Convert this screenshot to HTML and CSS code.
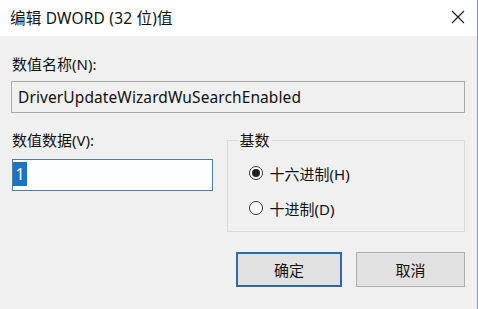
FILE: index.html
```html
<!DOCTYPE html>
<html lang="zh-CN">
<head>
<meta charset="utf-8">
<title>编辑 DWORD (32 位)值</title>
<link rel="stylesheet" href="styles.css">
</head>
<body>
<div class="dialog">
  <div class="titlebar">
    <span class="title">编辑 DWORD (32 位)值</span>
    <svg class="close" width="14" height="14" viewBox="0 0 14 14"><path d="M1 1 L13 13 M13 1 L1 13" stroke="#222" stroke-width="1.2" fill="none"/></svg>
  </div>
  <div class="content">
    <div class="label">数值名称(N):</div>
    <div class="namebox">DriverUpdateWizardWuSearchEnabled</div>
    <div class="row">
      <div class="leftcol">
        <div class="label">数值数据(V):</div>
        <div class="valuebox"><span class="sel">1</span></div>
      </div>
      <fieldset class="group">
        <legend>基数</legend>
        <div class="radio first"><span class="dot checked"></span><span>十六进制(H)</span></div>
        <div class="radio"><span class="dot"></span><span>十进制(D)</span></div>
      </fieldset>
    </div>
    <div class="buttons">
      <div class="btn ok">确定</div>
      <div class="btn cancel">取消</div>
    </div>
  </div>
</div>
</body>
</html>
```

FILE: styles.css
```css
html, body {
  margin: 0;
  padding: 0;
  background: #f0f0f0;
}
.dialog {
  width: 478px;
  height: 309px;
  box-sizing: border-box;
  border-right: 1px solid #7c9cbc;
  font-family: "Noto Sans", "Noto Sans CJK SC", sans-serif;
  color: #111;
  background: #f0f0f0;
  display: flex;
  flex-direction: column;
}
.titlebar {
  height: 36px;
  background: #fff;
  display: flex;
  align-items: center;
  justify-content: space-between;
  padding: 0 12px 0 10px;
  flex: none;
}
.title {
  font-size: 15.5px;
  line-height: 20px;
  letter-spacing: 0.2px;
}
.close {
  display: block;
  margin-top: -2px;
}
.content {
  padding: 18px 12px 0 11px;
  display: flex;
  flex-direction: column;
}
.label {
  font-size: 15px;
  line-height: 20px;
  padding-left: 1px;
}
.namebox {
  margin-top: 7px;
  height: 32px;
  box-sizing: border-box;
  border: 1px solid #a9a9a9;
  background: #f0f0f0;
  font-size: 15.5px;
  letter-spacing: 0.1px;
  line-height: 30px;
  padding-left: 6px;
}
.row {
  display: flex;
  margin-top: 17px;
}
.leftcol {
  width: 201px;
  margin-left: 1px;
  display: flex;
  flex-direction: column;
}
.leftcol .label {
  padding-left: 0;
}
.valuebox {
  margin-top: 9px;
  height: 32px;
  box-sizing: border-box;
  border: 1px solid #4a7fa8;
  background: #fdfeff;
  padding: 2px 0 0 0;
}
.sel {
  display: inline-block;
  width: 14px;
  height: 24px;
  background: #1f73c0;
  color: #fff;
  font-size: 16px;
  line-height: 24px;
  text-align: center;
  vertical-align: top;
}
.group {
  margin: 0 0 0 14px;
  padding: 0;
  width: 239px;
  height: 102px;
  box-sizing: border-box;
  border: 1px solid #dcdcdc;
}
.group legend {
  font-size: 15px;
  line-height: 20px;
  padding: 0 2px;
  margin-left: 10px;
}
.radio {
  display: flex;
  align-items: center;
  height: 20px;
  margin: 15px 0 0 21px;
  font-size: 15px;
}
.radio.first {
  margin-top: 13px;
}
.dot {
  width: 14px;
  height: 14px;
  box-sizing: border-box;
  border: 1px solid #333;
  border-radius: 50%;
  background: #fff;
  margin-right: 7px;
  display: flex;
  align-items: center;
  justify-content: center;
}
.dot.checked::after {
  content: "";
  width: 8px;
  height: 8px;
  border-radius: 50%;
  background: #222;
}
.buttons {
  display: flex;
  justify-content: flex-end;
  gap: 14px;
  margin-top: 20px;
}
.btn {
  height: 35px;
  box-sizing: border-box;
  background: #e1e1e1;
  font-size: 15px;
  display: flex;
  align-items: center;
  justify-content: center;
}
.ok {
  width: 106px;
  border: 2px solid #2f6aa0;
}
.cancel {
  width: 109px;
  border: 1px solid #adadad;
}
```
